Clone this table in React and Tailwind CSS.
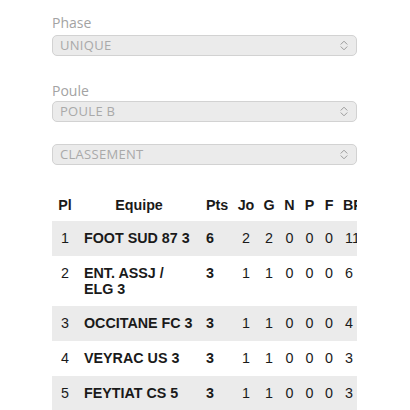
import React from "react";

const rows = [
  { pl: 1, team: ["FOOT SUD 87 3"], pts: 6, jo: 2, g: 2, n: 0, p: 0, f: 0, bp: 11 },
  { pl: 2, team: ["ENT. ASSJ /", "ELG 3"], pts: 3, jo: 1, g: 1, n: 0, p: 0, f: 0, bp: 6 },
  { pl: 3, team: ["OCCITANE FC 3"], pts: 3, jo: 1, g: 1, n: 0, p: 0, f: 0, bp: 4 },
  { pl: 4, team: ["VEYRAC US 3"], pts: 3, jo: 1, g: 1, n: 0, p: 0, f: 0, bp: 3 },
  { pl: 5, team: ["FEYTIAT CS 5"], pts: 3, jo: 1, g: 1, n: 0, p: 0, f: 0, bp: 3 },
];

function Chevrons() {
  return (
    <svg width="8" height="11" viewBox="0 0 8 11" fill="none" stroke="#9a9a9a" strokeWidth="1" strokeLinecap="round" strokeLinejoin="round">
      <path d="M1 4.2 L4 1.2 L7 4.2" />
      <path d="M1 6.8 L4 9.8 L7 6.8" />
    </svg>
  );
}

function Select({ value }) {
  return (
    <div className="flex h-[21px] items-center justify-between rounded-[5px] border border-[#d2d2d2] bg-[#ebebeb] pl-[7px] pr-[8px]">
      <span className="text-[13px] leading-none tracking-[0.3px] text-[#a9a9a9]">{value}</span>
      <Chevrons />
    </div>
  );
}

export default function App() {
  return (
    <div className="h-[410px] w-[410px] overflow-hidden bg-white" style={{ fontFamily: '"Open Sans", sans-serif' }}>
      <div className="ml-[52px] w-[305px] pt-[14px]">
        <div className="text-[14px] leading-[18px] text-[#a3a3a3]">Phase</div>
        <div className="mt-[3px]">
          <Select value="UNIQUE" />
        </div>
        <div className="mt-[26px] text-[14px] leading-[18px] text-[#a3a3a3]">Poule</div>
        <div className="mt-[1px]">
          <Select value="POULE B" />
        </div>
        <div className="mt-[22px]">
          <Select value="CLASSEMENT" />
        </div>

        <div className="mt-[24px] overflow-hidden" style={{ fontFamily: '"Liberation Sans", Arial, sans-serif' }}>
          <table className="w-[320px] table-fixed border-collapse text-[14.3px] leading-[17px] text-[#1a1a1a]">
            <colgroup>
              <col className="w-[26px]" />
              <col className="w-[122px]" />
              <col className="w-[33px]" />
              <col className="w-[26px]" />
              <col className="w-[20px]" />
              <col className="w-[21px]" />
              <col className="w-[19px]" />
              <col className="w-[20px]" />
              <col className="w-[33px]" />
            </colgroup>
            <thead>
              <tr className="h-[32px] font-bold">
                <th className="text-center">Pl</th>
                <th className="text-center">Equipe</th>
                <th className="pl-[6px] text-left">Pts</th>
                <th className="text-center">Jo</th>
                <th className="text-center">G</th>
                <th className="text-center">N</th>
                <th className="text-center">P</th>
                <th className="text-center">F</th>
                <th className="whitespace-nowrap pl-[4px] text-left">BP</th>
              </tr>
            </thead>
            <tbody>
              {rows.map((r, i) => (
                <tr key={r.pl} className={i % 2 === 0 ? "bg-[#ebebeb]" : "bg-white"}>
                  <td className="py-[9px] text-center align-top">{r.pl}</td>
                  <td className="py-[9px] pl-[6px] align-top font-bold">
                    {r.team.map((t) => (
                      <div key={t} className={r.team.length > 1 ? "leading-[16px]" : ""}>{t}</div>
                    ))}
                  </td>
                  <td className="py-[9px] pl-[6px] align-top font-bold">{r.pts}</td>
                  <td className="py-[9px] text-center align-top">{r.jo}</td>
                  <td className="py-[9px] text-center align-top">{r.g}</td>
                  <td className="py-[9px] text-center align-top">{r.n}</td>
                  <td className="py-[9px] text-center align-top">{r.p}</td>
                  <td className="py-[9px] text-center align-top">{r.f}</td>
                  <td className="py-[9px] pl-[6px] text-left align-top">{r.bp}</td>
                </tr>
              ))}
            </tbody>
          </table>
        </div>
      </div>
    </div>
  );
}
